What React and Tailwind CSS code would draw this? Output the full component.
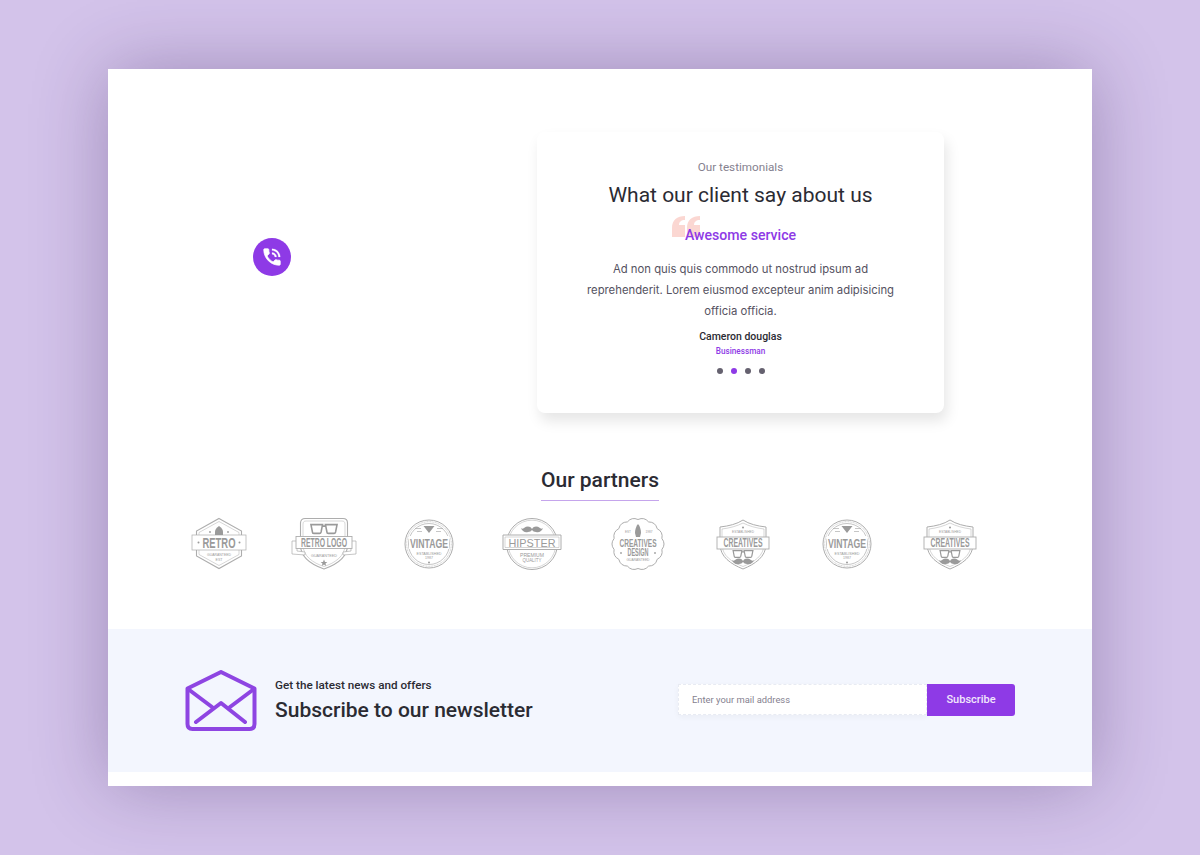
const GREY = "#adadad";
const INK = "#9a9a9a";
const narrow = "'Liberation Sans Narrow', 'Liberation Sans', sans-serif";

// small helper for the text inside the partner badges
const T = ({ x = 32, y, size, w, bold = true, children }) => (
  <text x={x} y={y} textAnchor="middle" fontSize={size} fontFamily={narrow} fontWeight={bold ? 700 : 400} fill={INK} stroke="none" textLength={w} lengthAdjust="spacingAndGlyphs">
    {children}
  </text>
);

const Logo = ({ className = "", children }) => (
  <svg viewBox="0 0 64 54" width="64" height="54" fill="none" stroke={GREY} strokeWidth="1" className={`mx-auto overflow-visible ${className}`}>
    {children}
  </svg>
);

const Glasses = ({ y, w = 1 }) => (
  <g transform={`translate(32 ${y}) scale(${w})`} strokeWidth="1.1" stroke={INK}>
    <path d="M-9 -3h8l-1 5q-.3 1-1 1h-4q-1 0-1-1zM1 -3h8l-1 5q-.3 1-1 1h-4q-1 0-1-1zM-1 -2h2" />
  </g>
);

const Stache = ({ y }) => <path d={`M32 ${y}c2-3 5-3 8-1c1 1 2 1 3 0c-1 3-4 5-7 4c-2 0-3-1-4-2c-1 1-2 2-4 2c-3 1-6-1-7-4c1 1 2 1 3 0c3-2 6-2 8 1z`} fill={INK} stroke="none" />;

const Retro = () => (
  <Logo className="-translate-x-[1px]">
    <path d="M32 1.500L54.500 14V39L32 51.500L9.500 39V14Z" strokeWidth="1.1" />
    <path d="M32 4.500L52 15.500V37.500L32 48.500L12 37.500V15.500Z" strokeWidth=".5" />
    <rect x="5" y="18" width="54" height="15" fill="#fff" strokeWidth=".7" />
    <path d="M32 9c3 2 4 4 4 6v3h-8v-3c0-2 1-4 4-6z" fill={INK} stroke="none" />
    <circle cx="23" cy="15" r=".9" fill={INK} stroke="none" />
    <circle cx="41" cy="15" r=".9" fill={INK} stroke="none" />
    <T y="31" size="15.500" w="33">RETRO</T>
    <circle cx="11.500" cy="25.500" r="1" fill={INK} stroke="none" />
    <circle cx="52.500" cy="25.500" r="1" fill={INK} stroke="none" />
    <T y="39" size="3.800" w="24" bold={false}>GUARANTEED</T>
    <T y="44" size="3" w="7" bold={false}>EST</T>
  </Logo>
);

const RetroLogo = () => (
  <Logo className="-translate-x-[1px]">
    <path d="M8.500 6c0-3 2-4.500 4.500-4.500h38c2.500 0 4.500 1.500 4.500 4.500v22c0 13-12 20-23.500 24C20.500 48 8.500 41 8.500 28z" strokeWidth="1.1" />
    <path d="M11 7c0-2 1-3 3-3h36c2 0 3 1 3 3v21c0 11-10 18-21 21.500C21 46 11 39 11 28z" strokeWidth=".5" />
    <Glasses y="12" w="1.450" />
    <path d="M0 24h5v10l8 1v3l-13-1zM64 24h-5v10l-8 1v3l13-1z" strokeWidth=".7" fill="#fff" />
    <rect x="4" y="19.500" width="56" height="12" strokeWidth=".9" fill="#fff" />
    <T y="30" size="12.500" w="46">RETRO LOGO</T>
    <T y="39.500" size="3.800" w="26" bold={false}>GUARANTEED</T>
    <path d="M32 42.500l1 2.400 2.400.2-1.900 1.500.7 2.400-2.200-1.400-2.200 1.400.7-2.400-1.900-1.500 2.400-.2z" fill={INK} stroke="none" />
  </Logo>
);

const Vintage = () => (
  <Logo>
    <circle cx="32" cy="27" r="24" strokeWidth="1" />
    <circle cx="32" cy="27" r="22.300" strokeWidth=".6" strokeDasharray="1 .6" />
    <circle cx="32" cy="27" r="20.500" strokeWidth=".7" />
    <path d="M26.500 9h11l-5.500 7z" fill={INK} stroke="none" />
    <path d="M18 11.500h6M40 11.500h6M20 14.500h5M39 14.500h5" strokeWidth=".7" />
    <rect x="12" y="19" width="40" height="13" fill="#fff" stroke="none" />
    <T y="31" size="13.500" w="38">VINTAGE</T>
    <T y="37.500" size="4" w="25" bold={false}>ESTABLISHED</T>
    <T y="42" size="3.500" w="8" bold={false}>1987</T>
    <circle cx="32" cy="45.500" r="1" fill={INK} stroke="none" />
  </Logo>
);

const Hipster = () => (
  <Logo className="-translate-x-[2px]">
    <circle cx="32" cy="27" r="25.500" strokeWidth="1" />
    <circle cx="32" cy="27" r="23.800" strokeWidth=".5" />
    <Stache y="12" />
    <path d="M3 18h58v14.500H3z" fill="#fff" strokeWidth="1" />
    <path d="M5 20h54v10.500H5z" strokeWidth=".5" />
    <T y="30" size="11.500" w="47" bold={false}>HIPSTER</T>
    <T y="40" size="5" w="24" bold={false}>PREMIUM</T>
    <T y="45" size="4.500" w="19" bold={false}>QUALITY</T>
  </Logo>
);

const scallop = () => {
  const pts = [];
  const n = 14;
  for (let i = 0; i <= n; i++) {
    const a = (i / n) * Math.PI * 2 - Math.PI / 2;
    pts.push([32 + 24.500 * Math.cos(a), 27 + 24.500 * Math.sin(a)]);
  }
  return pts
    .map((p, i) => (i === 0 ? `M${p[0].toFixed(1)} ${p[1].toFixed(1)}` : `A9 9 0 0 1 ${p[0].toFixed(1)} ${p[1].toFixed(1)}`))
    .join("");
};

const CreativesDesign = () => (
  <Logo>
    <path d={scallop()} strokeWidth="1" />
    <path d="M32 7c2 2 3 6 3 9l-1 4h-4l-1-4c0-3 1-7 3-9z" fill={INK} stroke="none" />
    <T x="22" y="16" size="3.200" w="6" bold={false}>EST</T>
    <T x="43" y="16" size="3.200" w="7" bold={false}>1987</T>
    <T y="30" size="11.500" w="37">CREATIVES</T>
    <T y="39" size="10" w="21">DESIGN</T>
    <path d="M14 35l2 2M16 35l-2 2M48 35l2 2M50 35l-2 2" strokeWidth=".8" />
    <T y="44" size="3.500" w="23" bold={false}>GUARANTEED</T>
  </Logo>
);

const CreativesShield = ({ className = "" }) => (
  <Logo className={className}>
    <path d="M32 3c6 4 14 6 23 7v17c0 13-11 20-23 25c-12-5-23-12-23-25V10c9-1 17-3 23-7z" strokeWidth="1" />
    <path d="M32 6c6 3 13 5 21 6v15c0 12-10 18-21 22.500C21 45 11 39 11 27V12c8-1 15-3 21-6z" strokeWidth=".5" />
    <circle cx="32" cy="10.500" r="1" fill={INK} stroke="none" />
    <T y="16" size="3.500" w="22" bold={false}>ESTABLISHED</T>
    <rect x="6" y="20" width="52" height="12" fill="#fff" strokeWidth=".9" />
    <T y="30" size="12.500" w="39">CREATIVES</T>
    <Glasses y="37" w="1.100" />
    <Stache y="44" />
  </Logo>
);

const Envelope = () => (
  <svg viewBox="0 0 72 61" width="72" height="61" fill="none" stroke="#8e45e2" strokeWidth="4" strokeLinecap="round" strokeLinejoin="round">
    <path d="M2.500 18.500L36 2l33.500 16.500V54q0 5-5 5H7.500q-5 0-5-5z" />
    <path d="M3 19L27 37M69 19L45 37M11 52L36 33L60 52" />
  </svg>
);

const QuoteMark = () => (
  <svg viewBox="0 0 28 21" width="28" height="21" fill="#fbd7d2" className="absolute left-[135px] top-[84px]">
    <path d="M0 12C0 4 5 0 13 0V4C9 4 7 6 7 9H13V21H0Z" />
    <path d="M15 12C15 4 20 0 28 0V4C24 4 22 6 22 9H28V21H15Z" />
  </svg>
);

// handset with two signal arcs, thickened a little with a stroke
const PhoneIcon = () => (
  <svg viewBox="0 0 24 24" width="22" height="22" fill="#fff" stroke="#fff" strokeWidth="0.8" strokeLinejoin="round">
    <path d="M20 15.500c-1.250 0-2.450-.2-3.570-.57-.35-.11-.74-.03-1.020.24l-2.200 2.200c-2.830-1.440-5.150-3.750-6.590-6.590l2.200-2.210c.28-.26.36-.65.25-1C8.700 6.450 8.500 5.250 8.500 4c0-.55-.45-1-1-1H4c-.55 0-1 .45-1 1 0 9.390 7.610 17 17 17 .55 0 1-.45 1-1v-3.500c0-.55-.45-1-1-1z" />
    <path d="M19 12h2c0-4.970-4.030-9-9-9v2c3.870 0 7 3.130 7 7zm-4 0h2c0-2.760-2.240-5-5-5v2c1.660 0 3 1.340 3 3z" strokeWidth="0.2" />
  </svg>
);

export default function App() {
  return (
    <div className="h-[855px] overflow-hidden bg-[#d3c3ea] pt-[69px] font-['Roboto',sans-serif]">
      <div className="mx-auto h-[717px] w-[984px] bg-white shadow-[0_0_70px_rgba(50,25,85,0.32)]">
        {/* testimonial row */}
        <div className="flex h-[344px] items-start pl-[145px] pt-[63px]">
          <div className="mt-[106px] flex h-[38px] w-[38px] shrink-0 items-center justify-center rounded-full bg-[#8e3ae6]">
            <PhoneIcon />
          </div>
          <div className="relative ml-[246px] flex h-[281px] w-[407px] flex-col items-center rounded-lg bg-white pt-[28px] text-center shadow-[3px_8px_14px_rgba(0,0,0,0.1)]">
            <p className="text-[11.700px] leading-[15px] text-[#85818f]">Our testimonials</p>
            <h2 className="mt-[6px] text-[21px] leading-[28px] text-[#2b2b33]">What our client say about us</h2>
            <QuoteMark />
            <h3 className="relative mt-[16px] text-[14.100px] font-medium leading-[20px] text-[#8e3ae6]">Awesome service</h3>
            <p className="mt-[14px] w-[330px] font-['Inter',sans-serif] text-[11.300px] leading-[21px] text-[#55525f]">
              Ad non quis quis commodo ut nostrud ipsum ad reprehenderit. Lorem eiusmod excepteur anim adipisicing officia officia.
            </p>
            <p className="mt-[7px] text-[10.500px] font-medium leading-[15px] text-[#2b2b33]">Cameron douglas</p>
            <p className="mt-[1px] text-[8.200px] font-medium leading-[12px] text-[#8e3ae6]">Businessman</p>
            <div className="mt-[11px] flex gap-[8px]">
              <span className="h-[6px] w-[6px] rounded-full bg-[#65616f]" />
              <span className="h-[6px] w-[6px] rounded-full bg-[#8e3ae6]" />
              <span className="h-[6px] w-[6px] rounded-full bg-[#65616f]" />
              <span className="h-[6px] w-[6px] rounded-full bg-[#65616f]" />
            </div>
          </div>
        </div>

        {/* partners */}
        <div className="flex justify-center pt-[53px]">
          <h2 className="border-b border-[#c5a5ec] pb-[6px] text-[21px] font-medium leading-[28px] text-[#2b2b33]">Our partners</h2>
        </div>
        <div className="ml-[60px] mt-[16px] grid w-[836px] grid-cols-8">
          <Retro />
          <RetroLogo />
          <Vintage />
          <Hipster />
          <CreativesDesign />
          <CreativesShield />
          <Vintage />
          <CreativesShield className="-translate-x-[2px]" />
        </div>

        {/* newsletter */}
        <div className="mt-[58px] flex h-[143px] items-center bg-[#f3f6fe] pl-[77px] pr-[77px]">
          <Envelope />
          <div className="mb-[2px] ml-[18px]">
            <p className="text-[11.700px] font-medium leading-[18px] text-[#2b2b33]">Get the latest news and offers</p>
            <p className="mt-[2px] text-[21px] font-medium leading-[28px] text-[#2b2b33]">Subscribe to our newsletter</p>
          </div>
          <div className="mb-[2px] ml-auto flex items-center">
            <div className="flex h-[31px] w-[249px] items-center border border-dashed border-[#e8ebf3] bg-white pl-[13px] pt-[2px] text-[9.400px] text-[#85818f] shadow-[0_2px_6px_rgba(0,0,0,0.04)]">
              Enter your mail address
            </div>
            <button className="h-[32px] w-[88px] rounded-r-[3px] bg-[#8e3ae6] pt-[2px] text-[11px] font-medium text-[#f1e6fc]">Subscribe</button>
          </div>
        </div>
      </div>
    </div>
  );
}
